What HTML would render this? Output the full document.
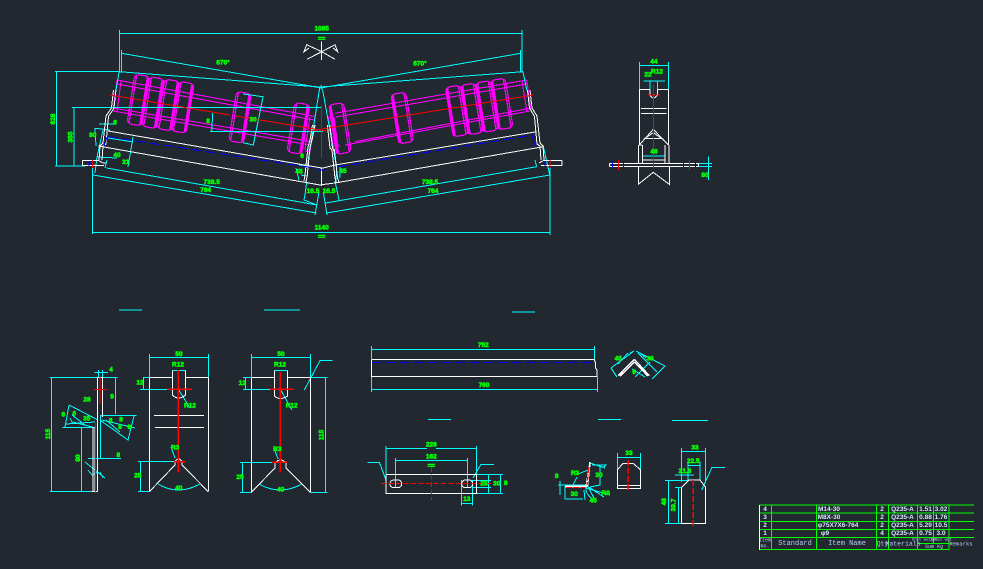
<!DOCTYPE html>
<html><head><meta charset="utf-8"><title>Idler drawing</title>
<style>
html,body{margin:0;padding:0;background:#212830;width:983px;height:569px;overflow:hidden}
svg{display:block}
.t text{font-family:"Liberation Sans",sans-serif;font-size:6.5px;font-weight:bold;fill:#00ff00;stroke:#00ff00;stroke-width:.55;text-anchor:middle;dominant-baseline:central}
.b text{font-family:"Liberation Mono",monospace;font-size:7px;fill:#b4cdf5;text-anchor:middle;dominant-baseline:central}
.w text{font-family:"Liberation Sans",sans-serif;font-size:6.5px;font-weight:bold;fill:#d8e8ff;text-anchor:middle;dominant-baseline:central}
</style></head><body>
<svg width="983" height="569" viewBox="0 0 983 569" xmlns="http://www.w3.org/2000/svg">
<defs>
<g id="r"><rect x="-7.5" y="-25" width="15" height="50" rx="4.5" fill="none" stroke="#ff00ff" stroke-width="1.2"/><path d="M6.2 -24V24" stroke="#ff00ff" stroke-width="3" fill="none"/><path d="M-5.5 -24V24" stroke="#ff00ff" stroke-width="1.2" fill="none"/></g>
</defs>
<rect width="983" height="569" fill="#212830"/>

<!-- magenta rollers -->
<g fill="none" stroke="#ff00ff" stroke-width="1.1" shape-rendering="crispEdges">
<path d="M117 80L315 116.5M117 84L314 120M113 108L311 141.5M113 111L310 145M117 80L113 111M121 81L117 112M315 116.5L310 152L305 151M310 117L305 150"/>
<path d="M526.7 80L335 113.3M526.7 84L336 117M531 108L355 141.7M530 111L345 145M526.7 80L531 110M522 81L527 112M328.3 116.7L333.3 146L340 146M334 117L338 146"/>
</g>
<g shape-rendering="crispEdges">
<use href="#r" transform="translate(138.3 100) rotate(9)"/>
<use href="#r" transform="translate(153 102.7) rotate(9)"/>
<use href="#r" transform="translate(168.3 105) rotate(9)"/>
<use href="#r" transform="translate(182.7 107.3) rotate(9)"/>
<use href="#r" transform="translate(240 117.3) rotate(9)"/>
<use href="#r" transform="translate(298.3 128.3) rotate(9)"/>
<use href="#r" transform="translate(501.7 104) rotate(-9) scale(-1 1)"/>
<use href="#r" transform="translate(486.7 106.5) rotate(-9) scale(-1 1)"/>
<use href="#r" transform="translate(471.7 109) rotate(-9) scale(-1 1)"/>
<use href="#r" transform="translate(456.7 111) rotate(-9) scale(-1 1)"/>
<use href="#r" transform="translate(402.3 118) rotate(-9) scale(-1 1)"/>
<use href="#r" transform="translate(340 128.5) rotate(-9) scale(-1 1)"/>
</g>

<!-- cyan dims -->
<g fill="none" stroke="#00ffff" stroke-width="1" shape-rendering="crispEdges">
<path d="M119.5 30V72M119 33.5H522M522 30V72M121.5 50V72M121.5 53.3L321.7 88M119 71.7L320 87L523 71.7M320.5 88L520.7 53.3M520.7 50V72"/>
<path d="M55 71.7H119M56.7 71.7V166M55 166H85M72 107.3H322M74 107.3V166M210 131.3H323"/>
<path d="M92.3 165V234M92 232.3H550M550 165V235M93 175L316.7 213M106.7 168L317 205M326.7 213L550 175M325.7 203L536.7 166.7"/>
<path d="M119 72L116 90M99 124H116.7M95 128.3L110 130M108 138L133 142M133 137L128 167M97 157L117 158M103 130L97 157L95 173M105 168L107 160M95 128L96 146"/>
<path d="M243 94L263 96.7L253.3 145L243 142.7M212.7 113L211.7 131.7"/>
<path d="M320 87L319 92L307 168M321 85L323 92L336.7 168M306.7 181.7L305 195L304 200L317 205M335 181L339 200M319 191.7L315 215M323.3 191.7L327 215M299 165L306 166M340 167V178M336.7 165L336 183M301 175L306 176M299 180L296 168"/>
<path d="M523 71.7L526.7 90M543 145L550 176M536.7 166.7L535 160"/>
<!-- right view -->
<path d="M639.3 62V90M668.3 62V90M639.3 65.7H668.3M643.3 81H665M650 81V90M657.3 81V90M642.7 156H665.7M708.3 156.7V180M698.3 163.3H712M698.3 166.7H712"/>
<!-- view A -->
<path d="M50 377.3H117.7M51.3 377.3V491.7M50 491.7H97.7M94.3 372.3H108M98.3 370V378M102.3 370V378M115.3 377.3V414M100 415.3H136.7M62.7 427.3H95M81.7 427.3V491.7M88 458.3H121M100.7 415V458"/>
<path d="M69 405L98 420M65 427L69 405M72 415L85 425M100 420L128 440L134 416M102 420L135 428M66 424L95 422M73 422L96 428M70 418L73 424M106 420L120 432M85 462L105 478M88 470L92 475L98 472M100 472L103 478"/>
<!-- view B -->
<path d="M149.3 354V377M208.3 354V377M149.3 357.3H208.3M172.3 370.7H185.7M143 377.3H149.3M143.3 377.3V389.3M140 389.3H167M138 461.7H175M140.7 461.7V491.7M138 491.7H149.3M178.3 389.3L190 408M171 447L175 458"/>
<path d="M158 484Q178 496 200 484"/>
<!-- view C -->
<path d="M251.3 354V377M310.3 354V377M251.3 357.3H310.3M274.3 370.7H287.7M243 377.3H251.3M245.3 377.3V389.3M243 389.3H270M240 462.3H275M242.7 462.3V492.3M240 492.3H251.3M280.3 389.3L292 410M274 448L278 459M310.3 377.3H327.7M310.3 492.3H327.7M325.3 377.3V492.3M304.3 390L320 360.7H332.7"/>
<path d="M259 484Q280 496 302 484"/>
<!-- long beam -->
<path d="M371.3 346V359M594.3 346V359M371.3 349.3H594.3M371.3 377V392M597.3 377V392M371.3 389.3H597.3"/>
<path d="M611 368L634 351M617 377L611 368M634 351L630 353M628 353L618 364M636 351L665 366M638 353L657 372M652 379L665 366M632 369L645 377M635 377L650 362M640 353L646 358"/>
<!-- plate -->
<path d="M386 446V474M476.7 446V474M386 448.3H427M436 448.3H476.7M395.3 458V488M467.3 458V488M395.3 460.3H467.3M367.3 462.3H379.3L386 480M494 464.3H481L473 478M476.7 474.3H503M476.7 493.3H503M473 480.3H491M473 487.7H491M488.3 474V493M500.7 474V493M461.3 480V505.7M472.7 480V505.7M461.3 503.3H472.7"/>
<!-- underlines -->
<path d="M119 310H142M264 310H300M512 312H535M428 419.3H451M598 419.3H621M672 420.3H708"/>
<!-- small angle view -->
<path d="M558 485H586M560 481V495M565 486V499H583M565 499V487M592 465H606L603 468M600 465V485L590 487M590 463L605 468M578 474L588 470M577 477L573 485M587 486L604 497M587 485L595 500M586 486L598 492M586 488L610 495M593 500Q585 493 586 488M584 490L585 500"/>
<!-- middle piece -->
<path d="M617.3 453V470M640.7 453V470M617.3 457.3H640.7"/>
<!-- right piece -->
<path d="M681.7 448V482M705.7 448V482M681.7 451.3H705.7M688 465.3H700M688 462V480M700 462V480M675 475H694M665 480.3H688M665 523.3H681.7M668.3 480.3V523.3M675 487.3H681.7M678.3 487V523.3M725 467.3H712L701.7 490"/>
</g>

<!-- white outlines -->
<g fill="none" stroke="#ffffff" stroke-width="1" shape-rendering="crispEdges">
<path d="M108.3 131L321.7 168M98.3 146L320 185M335 165L536.7 131.7M333.3 183.3L543.3 146.7M320 168L323 168L335 165M320 185L323 184.5L333 183.3M321.5 168V186"/>
<path d="M113.5 90L111.5 108L106 116L103 143L100 146L99 160M116 90L114 108L108.5 116.5L106 144L103 146L102 160"/>
<path d="M82.3 160.7H99M82.3 165.7H104M82.3 160.7V165.7M99 160.7L103 163H106"/>
<path d="M315 125L312 140L310 147L307.3 175L306 182M312.5 125L310 140L308 147L305 175L304 181M327.3 125L330 148L332 150L335 178L336.5 183M329.8 125L332.5 148L334.5 150L337.5 178L339 182"/>
<path d="M530 90L532 108L537 116L540 143L543 146L544 160M527.5 90L529.5 108L534.5 116.5L537 144L540 146L541 160"/>
<path d="M543 160.7H562M541 165.7H562M562 160.7V165.7M543 160.7L539 163"/>
<!-- X symbol -->
<path d="M321.7 41.7V60M321.7 51.7L306.7 44.7L304 51.7L309 48M321.7 51.7L307 59.3M321.7 51.7L335 44.7L337.7 51.7L333 48M321.7 51.7L335 59.3"/>
<!-- right view -->
<path d="M639.3 89.3V145M668.3 89.3V145M639.3 89.3H650M657.3 89.3H668.3M650 89.3V95Q653.5 101 657.3 95V89.3M641 108.3H666.7M641 113.3H666.7M653.3 129.3L639.3 145M653.3 129.3L668.3 145M653.3 132.7L645 138.3H661.7L653.3 132.7M638.3 145V163M642.7 145V163M665 145V163M669 145V163M642.7 160H665.7M609.3 163.3H698.3M609.3 166.7H698.3M609.3 163.3V166.7M698.3 163.3V166.7M638.3 166.7V184.3L653.3 172.3L669.3 184.3V166.7M642 145H639"/>
<!-- view A -->
<path d="M97.7 377.3V491.7M102.3 377.3V417M95 427V491.7M93 427V491.7M97.7 377.3H102.3M92 491.7H97.7"/>
<!-- view B -->
<path d="M149.3 377.3V491.7M208.3 377.3V491.7M149.3 377.3H172.3M185.7 377.3H208.3M172.3 370.7V395Q178 401 185.7 395V370.7M154 415.3H204M155 427.3H204M149.3 491.7L175 465V461.7Q178.5 456 182 461.7V465L208.3 491.7"/>
<!-- view C -->
<path d="M251.3 377.3V492.3M310.3 377.3V492.3M251.3 377.3H274.3M287.7 377.3H310.3M274.3 370.7V396Q280 401 287.7 396V370.7M251.3 492.3L275 468V463Q280.5 457 286 463V468L310.3 492.3"/>
<!-- beam -->
<path d="M371.3 359.3H594.3L595.5 363V368L597 370V376.3H371.3V359.3"/>
<path d="M634.3 359.3L618.3 375.7M634.3 362L620 376M634.3 359.3L649.3 375.7M634.3 362L648 376" stroke-width="1.5"/>
<!-- plate -->
<path d="M386 474.3H476.7V493.3H386V474.3"/>
<rect x="390" y="480" width="11.7" height="7.7" rx="3.6"/>
<rect x="461.7" y="480" width="11" height="7.7" rx="3.6"/>
<!-- small angle -->
<path d="M565 487H586L590 462M565 486H587.5L590 463" stroke-width="1.4"/>
<!-- middle piece -->
<path d="M617.3 470V488.3H640.7V470L633 463.3H623L617.3 470M617.3 485.3H640.7"/>
<!-- right piece -->
<path d="M681.7 487.3V523.3H705.7V487.3L700 480H689L681.7 487.3"/>
</g>

<!-- blue dashes -->
<g fill="none" stroke="#0000ff" stroke-width="1" shape-rendering="crispEdges" stroke-dasharray="10 4">
<path d="M108 136.7L316.7 168.3M338.3 166.7L533.3 135M372 362.3H594"/>
</g>
<g fill="none" stroke="#0000ff" stroke-width="1" shape-rendering="crispEdges">
<path d="M107 137L104 146M532 135L535 146M89 161V166M91 161V165M545 161V166M612.3 162V168M623.3 162V168M683.3 162V168M695.7 162V168M318 170H325"/>
</g>

<!-- red -->
<g fill="none" stroke="#ff0000" stroke-width="1" shape-rendering="crispEdges">
<path d="M110 95L230 115M236 116L326.7 131M310 131L533.3 95M321.7 105V158M92.3 160V168M550 160V168"/>
<path d="M653.3 85V168M648 95H660M618.3 160V170M689.3 160V170"/>
<path d="M100 377V404M94 389.3H107M95.3 423V493"/>
<path d="M178.3 370V472.7M167 389.3H192M174 461.7H185" stroke-width="1.4"/>
<path d="M280.3 372V472.7M270 389.3H294M272 462.3H287" stroke-width="1.6"/>
<path d="M381 483.3H492M431.3 467V500" stroke-dasharray="5 2.5"/>
<path d="M628.3 460V491M693.3 480V527" stroke-width="1.4" stroke-dasharray="6 2"/>
<path d="M566 487.5H585M589 467L587 485" stroke-width="1.3" stroke-dasharray="6 1.5"/>
</g>

<!-- green dimension text -->
<g class="t">
<text x="321.7" y="29">1085</text><text x="321.7" y="39" font-size="5">==</text>
<text x="223" y="63">670°</text><text x="420" y="64">670°</text>
<text x="53.3" y="119" transform="rotate(-90 53.3 119)">628</text>
<text x="71" y="137" transform="rotate(-90 71 137)">355</text>
<text x="92.7" y="135.7">90</text><text x="115" y="123">6</text><text x="117" y="155.7">40</text><text x="125.7" y="162.7">31</text>
<text x="211.7" y="182.7">738.5</text><text x="205.7" y="190.7">764</text><text x="208" y="121.7">8</text><text x="253" y="120">30</text>
<text x="302" y="156.7">6</text><text x="299" y="172">45</text><text x="313" y="191.7">16.5</text><text x="329" y="191.7">16.5</text>
<text x="321.7" y="228">1140</text><text x="321.7" y="237">==</text>
<text x="430" y="182.7">738.5</text><text x="433" y="191.7">764</text><text x="343" y="171.7">45</text>
<text x="654" y="62">44</text><text x="648" y="75">22</text><text x="657" y="72">R12</text><text x="654" y="152">48</text><text x="705" y="175.7">80</text>
<text x="111" y="370">4</text><text x="112" y="397">9</text><text x="87" y="400">28</text><text x="63.3" y="415">6</text><text x="74.3" y="414">6</text>
<text x="86.7" y="419">35</text><text x="110.7" y="421">6</text><text x="121" y="420">8</text><text x="120" y="427.7">8</text><text x="129.3" y="427.3">8</text>
<text x="48.3" y="434" transform="rotate(-90 48.3 434)">115</text><text x="78.3" y="458" transform="rotate(-90 78.3 458)">80</text><text x="118.3" y="455.7">8</text>
<text x="179" y="354.3">50</text><text x="178" y="365">R12</text><text x="140" y="383">12</text><text x="190" y="406">R12</text><text x="175" y="448">R3</text><text x="137.7" y="476">25</text><text x="178.7" y="488.3">40</text>
<text x="281" y="354.3">50</text><text x="280" y="365">R12</text><text x="242.3" y="383.3">12</text><text x="291.7" y="406">R12</text><text x="277.3" y="449.3">R3</text><text x="240" y="477.3">25</text><text x="280.7" y="490">40</text>
<text x="322" y="435" transform="rotate(-90 322 435)">115</text>
<text x="483.3" y="345.7">752</text><text x="484" y="385.3">760</text><text x="618.3" y="359">45</text><text x="650" y="359">30</text><text x="634" y="372.7">6</text>
<text x="431.3" y="445">228</text><text x="431.3" y="457">162</text><text x="431.3" y="466">==</text><text x="484" y="484">25</text><text x="496.7" y="484">30</text><text x="505.7" y="483.3">8</text><text x="466.7" y="499.3">13</text>
<text x="556.7" y="476.7">8</text><text x="575" y="473.3">R3</text><text x="599" y="475.7">30</text><text x="574.3" y="494.3">30</text><text x="605.7" y="493.3">R8</text><text x="593.3" y="501">45</text>
<text x="629" y="453.3">33</text><text x="695" y="448">33</text><text x="693.3" y="461.3">22.5</text><text x="685" y="471.3">21.3</text>
<text x="664.3" y="501.7" transform="rotate(-90 664.3 501.7)">48</text><text x="674" y="505" transform="rotate(-90 674 505)">39.7</text>
</g>

<!-- title block -->
<g fill="none" stroke="#00ff00" stroke-width="1" shape-rendering="crispEdges">
<path d="M759.3 505H974M759.3 513H974M759.3 521.3H974M759.3 529.3H974M759.3 537.7H974M759.3 549.3H949M771.3 505V550M816.7 505V550M876.7 505V550M888.3 505V550M917.3 505V550M933.3 505V544M949 505V550M917.3 543.3H949"/>
</g>
<path d="M759.5 505V550" stroke="#ffffff" stroke-width="1" shape-rendering="crispEdges"/>
<g class="w">
<text x="765" y="509.3">4</text><text x="765" y="517.3">3</text><text x="765" y="525.3">2</text><text x="765" y="533.6">1</text>
<text x="829" y="509.3">M14-30</text><text x="829" y="517.3">M8X-30</text><text x="838" y="525.3">φ75X7X6-764</text><text x="825" y="533.6">φ9</text>
<text x="882" y="509.3">2</text><text x="882" y="517.3">2</text><text x="882" y="525.3">2</text><text x="882" y="533.6">4</text>
<text x="902.5" y="509.3">Q235-A</text><text x="902.5" y="517.3">Q235-A</text><text x="902.5" y="525.3">Q235-A</text><text x="902.5" y="533.6">Q235-A</text>
<text x="925.5" y="509.3">1.51</text><text x="925.5" y="517.3">0.88</text><text x="925.5" y="525.3">5.29</text><text x="925.5" y="533.6">0.75</text>
<text x="941" y="509.3">3.02</text><text x="941" y="517.3">1.76</text><text x="941" y="525.3">10.5</text><text x="941" y="533.6">3.0</text>
</g>
<g class="b">
<text x="765" y="540.5" style="font-size:5px">Item</text><text x="765" y="546.5" style="font-size:5px">No.</text>
<text x="795" y="544">Standard</text><text x="847" y="544">Item Name</text>
<text x="882.5" y="544" style="font-size:6.5px">Qty</text><text x="903" y="544" style="font-size:6.5px">Materials</text>
<text x="925" y="540.5" style="font-size:4px">Unit weight</text><text x="941" y="540.5" style="font-size:4px">Total wgt</text>
<text x="934" y="547" style="font-size:5px">Sum  Kg</text><text x="961" y="544" style="font-size:5.5px">Remarks</text>
</g>
</svg>
</body></html>
